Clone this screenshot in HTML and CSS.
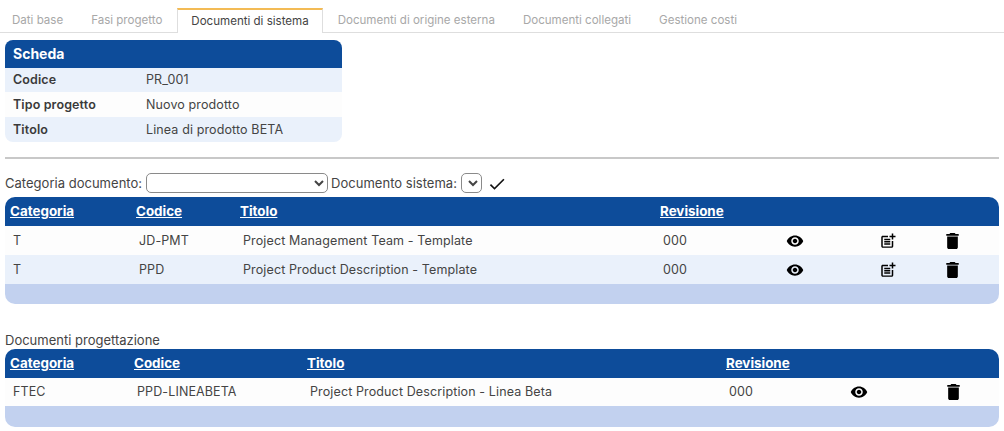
FILE: index.html
```html
<!DOCTYPE html>
<html lang="it">
<head>
<meta charset="utf-8">
<title>Documenti di sistema</title>
<link rel="stylesheet" href="styles.css">
</head>
<body>
<svg class="defs" width="0" height="0" aria-hidden="true">
  <symbol id="i-eye" viewBox="0 0 24 24"><path d="M12 4.5C7 4.5 2.73 7.61 1 12c1.73 4.39 6 7.5 11 7.5s9.27-3.11 11-7.5c-1.73-4.39-6-7.5-11-7.5zM12 17c-2.76 0-5-2.24-5-5s2.24-5 5-5 5 2.24 5 5-2.24 5-5 5zm0-8c-1.66 0-3 1.34-3 3s1.34 3 3 3 3-1.34 3-3-1.34-3-3-3z"/></symbol>
  <symbol id="i-add" viewBox="0 0 24 24"><path d="M17 19.22H5V7h7V5H5c-1.1 0-2 .9-2 2v12c0 1.1.9 2 2 2h12c1.1 0 2-.9 2-2v-7h-2v7.22zM19 2h-2v3h-3c.01.01 0 2 0 2h3v2.99c.01.01 2 0 2 0V7h3V5h-3V2zM7 9h8v2H7zM7 12v2h8v-2zM7 15h8v2H7z"/></symbol>
  <symbol id="i-trash" viewBox="5 3 14 18"><path d="M6 19c0 1.1.9 2 2 2h8c1.1 0 2-.9 2-2V7H6v12zM19 4h-3.5l-1-1h-5l-1 1H5v2h14V4z"/></symbol>
  <symbol id="i-check" viewBox="0 0 24 24"><path d="M9 16.17L4.83 12l-1.42 1.41L9 19 21 7l-1.41-1.41z"/></symbol>
</svg>

<nav class="tabs">
  <a class="tab">Dati base</a>
  <a class="tab">Fasi progetto</a>
  <a class="tab active">Documenti di sistema</a>
  <a class="tab">Documenti di origine esterna</a>
  <a class="tab">Documenti collegati</a>
  <a class="tab">Gestione costi</a>
</nav>

<main class="content">
  <section class="card">
    <h2 class="card-title">Scheda</h2>
    <div class="card-row tint"><span class="card-key">Codice</span><span>PR_001</span></div>
    <div class="card-row"><span class="card-key">Tipo progetto</span><span>Nuovo prodotto</span></div>
    <div class="card-row tint"><span class="card-key">Titolo</span><span>Linea di prodotto BETA</span></div>
  </section>

  <hr class="rule">

  <form class="filters">
    <label for="cat">Categoria documento:</label>
    <select id="cat" class="sel sel-wide"><option></option></select>
    <label for="doc">Documento sistema:</label>
    <select id="doc" class="sel sel-small"><option></option></select>
    <svg class="icon-check"><use href="#i-check"/></svg>
  </form>

  <table class="grid grid-a">
    <colgroup><col class="a1"><col class="a2"><col class="a3"><col class="a4"><col class="a5"><col class="a6"><col class="a7"><col></colgroup>
    <thead>
      <tr><th><a>Categoria</a></th><th><a>Codice</a></th><th><a>Titolo</a></th><th><a>Revisione</a></th><th></th><th></th><th></th><th></th></tr>
    </thead>
    <tbody>
      <tr>
        <td>T</td><td>JD-PMT</td><td>Project Management Team - Template</td><td>000</td>
        <td class="act"><svg class="ic eye"><use href="#i-eye"/></svg></td>
        <td class="act"><svg class="ic add"><use href="#i-add"/></svg></td>
        <td class="act"><svg class="ic trash"><use href="#i-trash"/></svg></td><td></td>
      </tr>
      <tr class="tint">
        <td>T</td><td>PPD</td><td>Project Product Description - Template</td><td>000</td>
        <td class="act"><svg class="ic eye"><use href="#i-eye"/></svg></td>
        <td class="act"><svg class="ic add"><use href="#i-add"/></svg></td>
        <td class="act"><svg class="ic trash"><use href="#i-trash"/></svg></td><td></td>
      </tr>
    </tbody>
    <tfoot><tr><td colspan="8"></td></tr></tfoot>
  </table>

  <p class="section-label">Documenti progettazione</p>

  <table class="grid grid-b">
    <colgroup><col class="b1"><col class="b2"><col class="b3"><col class="b4"><col class="b5"><col class="b6"><col></colgroup>
    <thead>
      <tr><th><a>Categoria</a></th><th><a>Codice</a></th><th><a>Titolo</a></th><th><a>Revisione</a></th><th></th><th></th><th></th></tr>
    </thead>
    <tbody>
      <tr>
        <td>FTEC</td><td>PPD-LINEABETA</td><td>Project Product Description - Linea Beta</td><td>000</td>
        <td class="act"><svg class="ic eye"><use href="#i-eye"/></svg></td>
        <td class="act"><svg class="ic trash"><use href="#i-trash"/></svg></td><td></td>
      </tr>
    </tbody>
    <tfoot><tr><td colspan="7"></td></tr></tfoot>
  </table>
</main>
</body>
</html>
```
FILE: styles.css
```css
* { box-sizing: border-box; }
html, body { margin: 0; background: #fff; }
body { font-family: Inter, "Open Sans", sans-serif; font-size: 12.5px; letter-spacing: .12px; color: #444; overflow: hidden; }
.defs { position: absolute; }

.tabs { display: flex; gap: 2px; height: 33px; padding-top: 8px; border-bottom: 1px solid #dedede; }
.tab { height: 25px; padding: 5px 13px 0; color: #a8a8a8; font-size: 11.55px; letter-spacing: 0; line-height: 14px; white-space: nowrap; }
.tab:first-child { padding-left: 12px; }
.tab.active { height: 25px; color: #444; background: #fff; border: 1px solid #dedede; border-top: 2px solid #f3bb55; border-bottom: 0; padding-top: 4px; margin-bottom: -1px; }

.content { padding: 7px 5px 0; }

.card { width: 337px; border-radius: 8px; overflow: hidden; }
.card-title { margin: 0; height: 28px; padding: 0 8px; background: #0d4c9a; color: #fff; font-size: 14px; font-weight: 700; letter-spacing: 0; line-height: 27px; }
.card-row { display: flex; height: 25px; padding: 0 8px 1px; align-items: center; background: #fdfdfd; }
.card-row:nth-child(2) { height: 24px; }
.card-row.tint { background: #eaf1fb; }
.card-key { width: 133px; font-weight: 600; color: #3a3a3a; }

.rule { height: 2px; margin: 15px 0 0; border: 0; background: #c8c8c8; }

.filters { display: flex; align-items: center; height: 38px; padding-top: 9px; white-space: nowrap; font-size: 13px; letter-spacing: .02px; }
.sel { height: 20px; margin: 0 3px 0 4px; padding: 0; background: #fff; border: 1px solid #8a8a8a; border-radius: 5px; font: inherit; color: #444; }
.sel-wide { width: 182px; }
.sel-small { width: 21px; }
.icon-check { width: 20px; height: 20px; margin: 3px 0 0 2px; fill: #111; }

.grid { width: 994px; table-layout: fixed; border-collapse: separate; border-spacing: 0; border-radius: 10px; overflow: hidden; }
.grid th { height: 29px; padding: 0 5px 2px; background: #0d4c9a; text-align: left; font-size: 13.4px; font-weight: 700; letter-spacing: 0; }
.grid th a { color: #fff; text-decoration: underline; }
.grid td { height: 29px; padding: 0 8px 1px; background: #fdfdfd; white-space: nowrap; }
.grid tr.tint td { background: #eaf1fb; }
.grid tfoot td { height: 20px; padding: 0; background: #c2d1ef; }
.grid td.act { padding: 0; text-align: center; }

.a1 { width: 126px; } .a2 { width: 104px; } .a3 { width: 420px; } .a4 { width: 90px; }
.a5 { width: 100px; } .a6 { width: 86px; } .a7 { width: 42px; }
.b1 { width: 124px; } .b2 { width: 173px; } .b3 { width: 419px; } .b4 { width: 86px; }
.b5 { width: 104px; } .b6 { width: 84px; }

.grid-b td { height: 28px; }
.grid-b tfoot td { height: 21px; }

.ic { display: inline-block; vertical-align: middle; fill: #000; }
.eye { width: 18px; height: 18px; }
.add { width: 18px; height: 18px; }
.trash { width: 13px; height: 16px; }

.section-label { margin: 28px 0 0; height: 17px; font-size: 13px; letter-spacing: 0; line-height: 17px; }
```
